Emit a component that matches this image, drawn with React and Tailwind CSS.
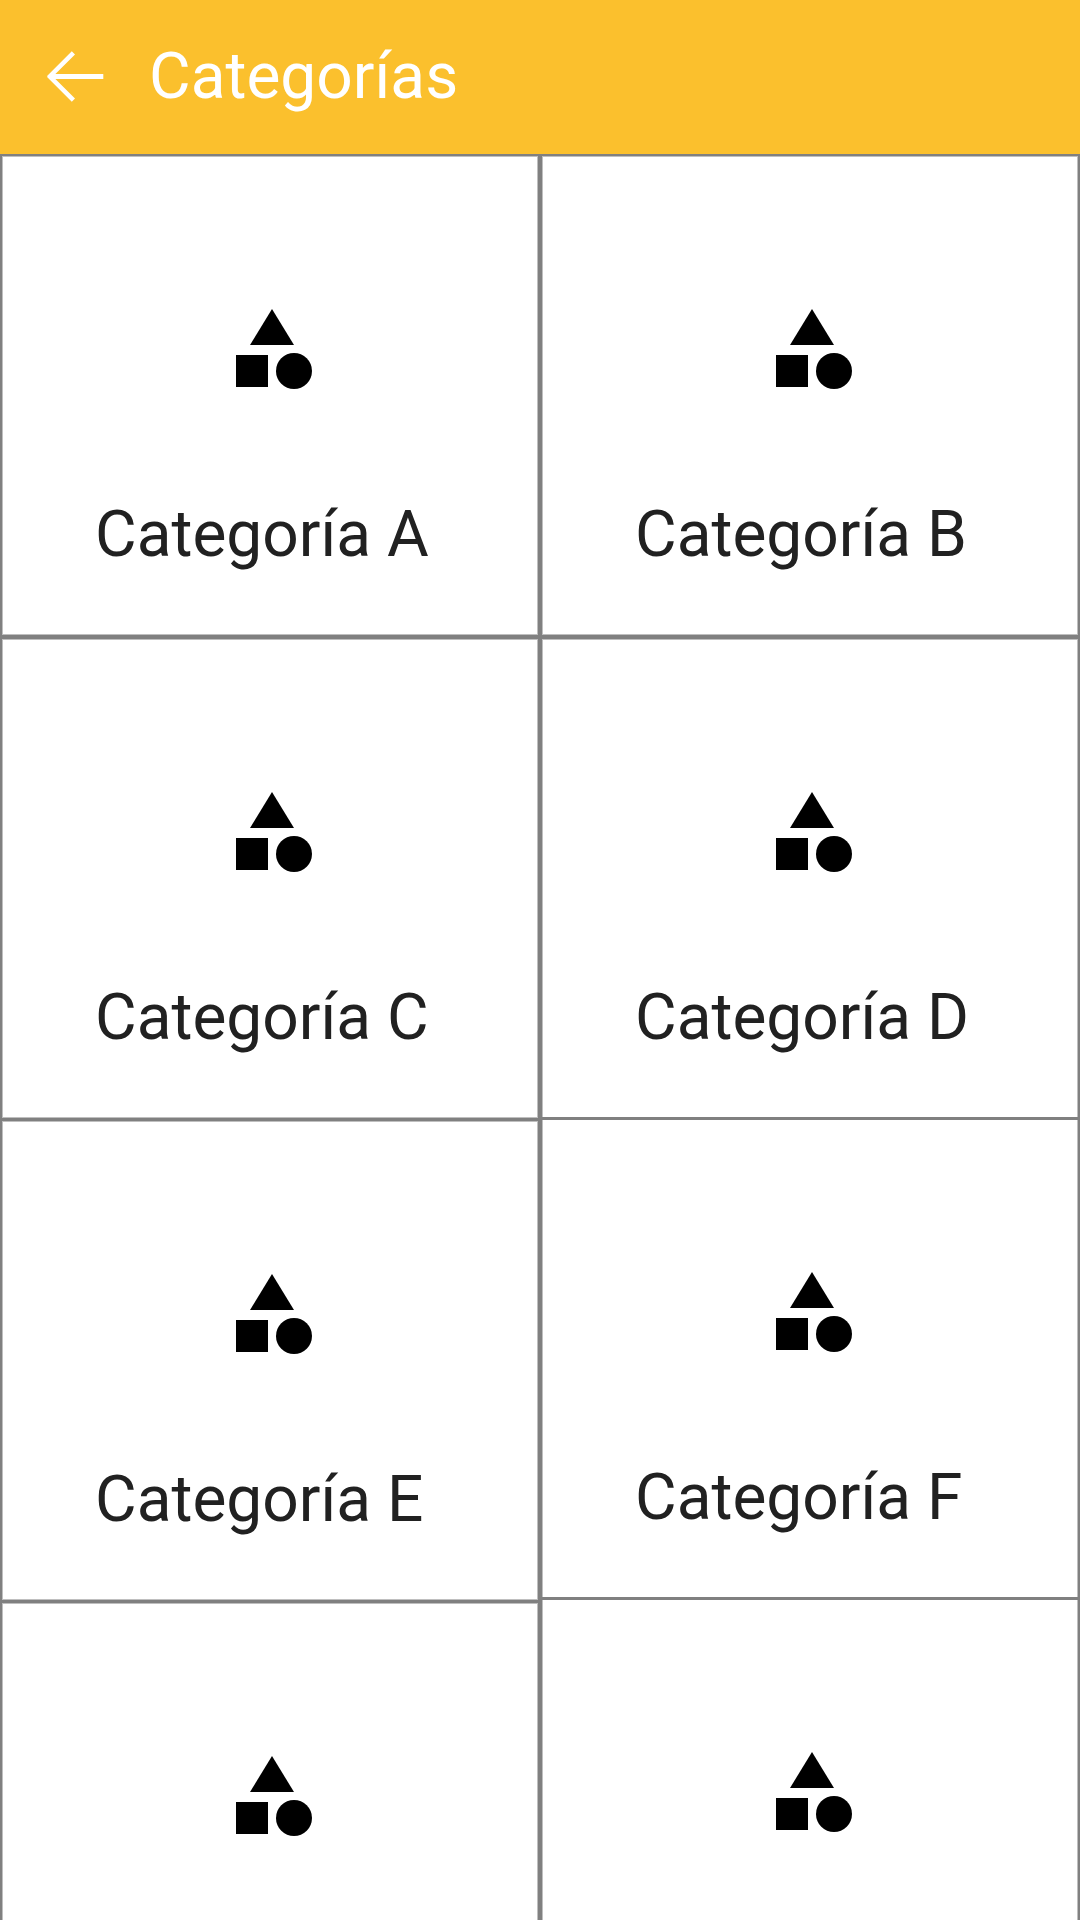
const ALL_EDGES = "shadow-[inset_0_0_0_1px_#bfbfbf]";
const SIDE_EDGES = "shadow-[inset_1px_0_0_#bfbfbf,inset_-1px_0_0_#bfbfbf]";
const TOP_SIDE_EDGES =
  "shadow-[inset_1px_0_0_#bfbfbf,inset_-1px_0_0_#bfbfbf,inset_0_1px_0_#bfbfbf]";

const left = [
  { id: "a", name: "Categoría A", box: "h-[483px] border-y-2", pad: "pt-[145px]", shade: ALL_EDGES },
  { id: "c", name: "Categoría C", box: "h-[483px] border-y-2", pad: "pt-[145px]", shade: ALL_EDGES },
  { id: "e", name: "Categoría E", box: "h-[482px] border-t-1 border-b-2", pad: "pt-[145px]", shade: ALL_EDGES },
  { id: "g", box: "h-[483px] border-t-1 border-b-2", pad: "pt-[145px]", shade: ALL_EDGES },
];

const right = [
  { id: "b", name: "Categoría B", box: "h-[483px] border-y-2", pad: "pt-[145px]", shade: ALL_EDGES },
  { id: "d", name: "Categoría D", box: "h-[483px] border-t-2 border-b-3", pad: "pt-[145px]", shade: TOP_SIDE_EDGES },
  { id: "f", name: "Categoría F", box: "h-[480px] border-b-3", pad: "pt-[144px]", shade: SIDE_EDGES },
  { id: "h", box: "h-[480px] border-b-3", pad: "pt-[144px]", shade: SIDE_EDGES },
];

function ShapesIcon() {
  return (
    <svg viewBox="0 0 24 24" className="ml-[222px] size-24 shrink-0 fill-black">
      <path d="M12 2l-5.500 9h11z" />
      <circle cx="17.5" cy="17.5" r="4.5" />
      <path d="M3 13.500h8v8H3z" />
    </svg>
  );
}

function Cell({ name, box, pad, shade }) {
  return (
    <div className={`flex shrink-0 flex-col overflow-hidden border-x-2 border-[#808080] ${box} ${shade}`}>
      <div className={`flex flex-col ${pad}`}>
        <ShapesIcon />
        {name && (
          <span className="mt-[98px] ml-[93px] text-[64px] leading-[80px] whitespace-nowrap text-[#212121]">
            {name}
          </span>
        )}
      </div>
    </div>
  );
}

export default function App() {
  return (
    <div className="flex h-[1920px] w-[1080px] flex-col overflow-hidden bg-white font-['Roboto',sans-serif]">
      <header className="flex h-[154px] shrink-0 items-center bg-[#fbc02d] text-white">
        <svg viewBox="0 0 64 64" className="ml-[43px] size-16 fill-white">
          <path d="M28.800 6.200L32 9.400 12.400 29H60.300V34H12.400L32 53.600 28.800 56.800 4.300 32.300V30.700Z" />
        </svg>
        <h1 className="ml-[42px] text-[64px] leading-[80px] font-normal">Categorías</h1>
      </header>
      <main className="flex min-h-0 flex-1 overflow-hidden">
        <div className="flex w-[540px] flex-col">
          {left.map(({ id, ...cell }) => <Cell key={id} {...cell} />)}
        </div>
        <div className="flex w-[540px] flex-col">
          {right.map(({ id, ...cell }) => <Cell key={id} {...cell} />)}
        </div>
      </main>
    </div>
  );
}
